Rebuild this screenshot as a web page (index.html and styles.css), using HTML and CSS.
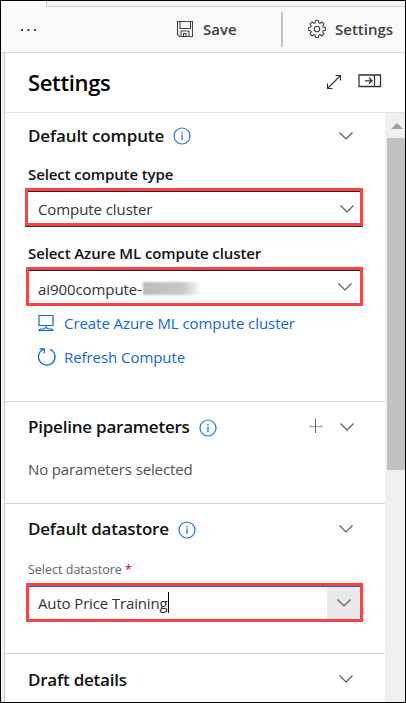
FILE: index.html
```
<!DOCTYPE html>
<html lang="en">
<head>
<meta charset="utf-8">
<title>Settings</title>
<link rel="stylesheet" href="styles.css">
</head>
<body>
<svg class="defs" width="0" height="0">
  <symbol id="chevron" viewBox="0 0 16 16"><path d="M1.500 4.500 8 11l6.500-6.500" fill="none" stroke="currentColor" stroke-width="1.1"/></symbol>
  <symbol id="info" viewBox="0 0 18 18"><circle cx="9" cy="9" r="8" fill="none" stroke="currentColor" stroke-width="1.2"/><path d="M9 7.500v5.500M9 5v1.400" stroke="currentColor" stroke-width="1.3"/></symbol>
</svg>
<div class="app">
  <div class="tabs"><div class="tab"></div><div class="tab-rest"></div></div>
  <div class="toolbar">
    <svg class="more" width="18" height="4" viewBox="0 0 18 4"><path d="M1 1h2v2H1zM7.500 1h2v2h-2zM14 1h2v2h-2z" fill="#444"/></svg>
    <svg class="save-icon" width="18" height="18" viewBox="0 0 18 18"><path d="M1.500 1.500h15v15h-13l-2-2zM4 1.500v7h10.500v-7M5 16.500v-5.500h8v5.500M7.500 16.500v-3h2.500v3" fill="none" stroke="#484848" stroke-width="1.1"/></svg>
    <span class="tool t-save">Save</span>
    <span class="divider"></span>
    <svg class="gear" width="20" height="20" viewBox="0 0 20 20" fill="none" stroke="#484848" stroke-width="1.1"><circle cx="10" cy="10" r="2.700"/><path d="M8.600 1.500h2.800l.5 2.300 1.100.5 2-1.300 2 2-1.300 2 .5 1.100 2.300.5v2.800l-2.300.5-.5 1.100 1.300 2-2 2-2-1.300-1.100.5-.5 2.300H8.600l-.5-2.300-1.100-.5-2 1.300-2-2 1.300-2-.5-1.100-2.300-.5V8.600l2.300-.5.5-1.100-1.300-2 2-2 2 1.300 1.100-.5z"/></svg>
    <span class="tool t-settings">Settings</span>
  </div>
  <div class="body">
    <div class="panel">
      <header class="head">
        <h1>Settings</h1>
        <svg class="expand" width="16" height="16" viewBox="0 0 16 16"><path d="M1.500 14.500l13-13M9.500 1.500h5v5M1.500 9.500v5h5" fill="none" stroke="#333" stroke-width="1.1"/></svg>
        <svg class="dock" width="24" height="14" viewBox="0 0 24 14"><path d="M1 1h21.500v11.500H1zM16.500 1v11.500M7 6.800h7M11 3.800l3 3-3 3" fill="none" stroke="#333" stroke-width="1.3"/></svg>
      </header>
      <div class="scroll">
        <div class="content">
          <section class="compute">
            <div class="row"><h2 class="t-dc">Default compute</h2><svg class="info"><use href="#info"/></svg><svg class="chev"><use href="#chevron"/></svg></div>
            <div class="label l1"><span class="t-type">Select compute type</span></div>
            <div class="select s1"><span class="t-cc">Compute cluster</span><svg class="chev"><use href="#chevron"/></svg></div>
            <div class="label l2"><span class="t-ml">Select Azure ML compute cluster</span></div>
            <div class="select s2"><span class="t-ai">ai900compute-</span><span class="redacted"></span><svg class="chev"><use href="#chevron"/></svg></div>
            <a class="link k1"><svg width="18" height="18" viewBox="0 0 18 18"><path d="M2 1.500h14v10H2zM9 11.500v2M2 16.500l1.500-1.500h3L9 13.500l2.500 1.500h3l1.500 1.500z" fill="none" stroke="currentColor" stroke-width="1.200"/></svg><span class="t-create">Create Azure ML compute cluster</span></a>
            <a class="link k2"><svg width="20" height="20" viewBox="0 0 20 20"><path d="M6.500 2.200A8.300 8.300 0 1 0 13 2.200M2.500 1.800h4.700v4.700" fill="none" stroke="currentColor" stroke-width="1.200"/></svg><span class="t-refresh">Refresh Compute</span></a>
          </section>
          <section class="params">
            <div class="row"><h2 class="t-pp">Pipeline parameters</h2><svg class="info low"><use href="#info"/></svg><svg class="plus" width="16" height="16" viewBox="0 0 16 16"><path d="M1 7.500h14" stroke="#aaa" stroke-width="1.500"/><path d="M7.500 0v14" stroke="#666"/></svg><svg class="chev c2"><use href="#chevron"/></svg></div>
            <p><span class="t-no">No parameters selected</span></p>
          </section>
          <section class="store">
            <div class="row"><h2 class="t-dd">Default datastore</h2><svg class="info low"><use href="#info"/></svg><svg class="chev"><use href="#chevron"/></svg></div>
            <div class="small"><span class="t-sd">Select datastore <b>*</b></span></div>
            <div class="select s3"><span class="t-auto">Auto Price Training</span><i class="caret"></i><span class="drop"><svg class="chev"><use href="#chevron"/></svg></span></div>
          </section>
          <section class="draft">
            <div class="row"><h2 class="t-draft">Draft details</h2><svg class="chev"><use href="#chevron"/></svg></div>
          </section>
        </div>
        <div class="bar"><div class="up"><svg width="12" height="6" viewBox="0 0 12 6"><path d="M6 0l6 6H0z" fill="#a0a0a0"/></svg></div><div class="thumb"></div></div>
      </div>
    </div>
  </div>
</div>
</body>
</html>
```
FILE: styles.css
```
* { box-sizing: border-box; }
body { margin: 0; font-family: "Open Sans", "Noto Sans", sans-serif; color: #111; }
.defs { position: absolute; }
h1, h2, p { margin: 0; }
svg { flex: none; display: block; }
span, h1, h2 { white-space: nowrap; }
.app { width: 406px; height: 703px; border: 1px solid #000; background: #fff; display: flex; flex-direction: column; overflow: hidden; }
.tabs { display: flex; height: 6px; flex: none; background: #fafafa; }
.tab { width: 45px; background: #fff; }
.tab-rest { flex: 1; background: #f4f4f4; border-left: 1px solid #ccc; border-bottom: 1px solid #d2d2d2; }
.toolbar { height: 46px; flex: none; background: #fafafa; border-bottom: 1px solid #d6d6d6; display: flex; align-items: center; }
.more { margin-left: 19px; }
.save-icon { margin-left: 138px; margin-top: -2px; }
.tool { font-size: 15px; font-weight: 550; color: #404040; padding-bottom: 2px; }
.t-save { margin-left: 9px; width: 78px; }
.divider { width: 2px; height: 35px; background: #c4c4c4; }
.gear { margin: -2px 0 0 24px; }
.t-settings { margin-left: 8px; }
.body { flex: 1; display: flex; padding-left: 3px; background: #f5f1f2; min-height: 0; }
.panel { flex: 1; display: flex; flex-direction: column; border-left: 1px solid #ccc; background: #fff; min-height: 0; }
.head { height: 60px; flex: none; border-bottom: 1px solid #e2e2e2; display: flex; align-items: center; padding: 0 0 2px 23px; }
h1 { font-size: 22px; font-weight: 550; width: 298px; color: #000; letter-spacing: -.35px; }
.dock { margin: -2px 0 0 16px; }
.scroll { flex: 1; display: flex; min-height: 0; }
.content { width: 380px; overflow: hidden; }
section { border-bottom: 1px solid #d6d6d6; padding-left: 23px; }
.compute { height: 289px; }
.params { height: 102px; }
.store { height: 150px; }
.draft { border: 0; }
.row { display: flex; align-items: center; height: 46px; padding-right: 31px; }
.params .row, .store .row, .draft .row { height: 50px; }
.params .row { padding-right: 30px; }
h2 { font-size: 17px; font-weight: 550; padding-bottom: 2px; letter-spacing: -.12px; }
.t-pp, .t-dd, .t-draft { letter-spacing: -.22px; }
.draft h2 { padding-bottom: 0; }
.info { width: 18px; height: 18px; margin-left: 9px; color: #1f6fdc; }
.low { position: relative; top: 1px; }
.chev { width: 16px; height: 16px; margin-left: auto; color: #555; }
.plus { margin-left: auto; }
.plus + .chev { margin-left: 15px; }
.label { font-size: 15px; font-weight: 550; display: flex; align-items: center; letter-spacing: -.1px; }
.l1 { height: 29px; }
.l2 { height: 32px; margin-top: 9px; padding-top: 3px; }
.select { border: 3px solid #fb4141; display: flex; align-items: center; height: 39px; width: 337px; margin-left: -2px; padding: 0 7px 0 9px; font-size: 15px; color: #333; box-shadow: inset 0 1px #222; letter-spacing: -.08px; }
.s1 { width: 338px; height: 38px; margin-left: -3px; padding: 3px 5px 0 10px; box-shadow: inset 0 1px #222, 0 1px #333; }
.s2 { padding-top: 4px; }
.s2 .chev { margin-top: -4px; }
.s3 { padding-right: 0; box-shadow: inset 0 1px #1a5fd0; letter-spacing: -.14px; }
.redacted { width: 56px; height: 13px; background: linear-gradient(90deg, #bbb, #c8c8c8 70%, #f6f6f6); margin-left: 1px; filter: blur(1px); }
.link { display: flex; align-items: center; height: 34px; padding-left: 9px; color: #1266d4; font-size: 15px; letter-spacing: -.06px; }
.k1 svg { margin: 0 9px 0 0; }
.k2 svg { margin-right: 7px; }
p { height: 34px; display: flex; align-items: center; font-size: 15px; color: #505050; letter-spacing: -.13px; }
.small { height: 31px; margin-bottom: -2px; display: flex; align-items: center; font-size: 12.500px; color: #666; }
.small b { color: #a4262c; font-weight: 400; }
.caret { width: 1px; height: 21px; background: #000; }
.drop { margin-left: auto; width: 33px; height: 32px; margin-top: 1px; background: #e9e9e9; display: flex; align-items: center; justify-content: center; }
.drop .chev { margin: 0 0 0 1px; }
.bar { flex: 1; background: #f0f0f0; padding-left: 2px; }
.up { height: 25px; padding: 10px 0 0 4px; }
.thumb { height: 332px; background: #c1c1c1; }
```
